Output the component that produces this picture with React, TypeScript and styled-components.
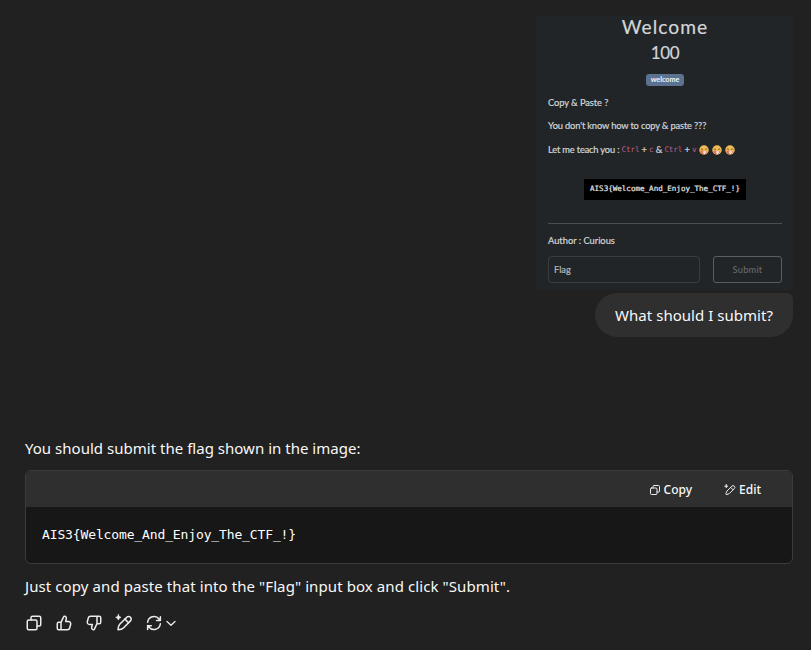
import React from "react";
import styled, { createGlobalStyle } from "styled-components";

const GlobalStyle = createGlobalStyle`
  * { box-sizing: border-box; }
  body { margin: 0; background: #212121; }
`;

const Page = styled.main`
  height: 650px;
  overflow: hidden;
  padding: 16px 18px 0 25px;
  background: #212121;
  color: #f8f8f8;
  font-family: "Noto Sans", "Open Sans", sans-serif;
  font-size: 15px;
  white-space: nowrap;
`;

const UserTurn = styled.section`
  display: flex;
  flex-direction: column;
  align-items: flex-end;
  gap: 3px;
`;

const Attachment = styled.article`
  width: 257px;
  height: 274px;
  padding: 0 11px 0 12px;
  border-radius: 3px;
  background: #212528;
  color: #d3d5d7;
  font-family: Lato, sans-serif;
  font-size: 9.3px;
`;

const Title = styled.h1`
  margin: 0;
  height: 23px;
  font-size: 19.2px;
  line-height: 22px;
  font-weight: 400;
  letter-spacing: 1.05px;
  text-align: center;
  -webkit-text-stroke: 0.2px #d3d5d7;
`;

const Points = styled.div`
  height: 27px;
  font-size: 17px;
  line-height: 27px;
  letter-spacing: -0.4px;
  text-align: center;
  -webkit-text-stroke: 0.2px #d3d5d7;
`;

const Tag = styled.div`
  width: 38px;
  height: 12px;
  margin: 8px auto 11px;
  border-radius: 3px;
  background: #5b7290;
  color: #f2f5f8;
  font-size: 7.2px;
  line-height: 12px;
  font-weight: 700;
  text-align: center;
`;

const Paragraph = styled.p<{ $spacing?: number }>`
  display: flex;
  align-items: center;
  height: 12px;
  margin: 0 0 11.4px;
  line-height: 12px;
  letter-spacing: ${(p) => p.$spacing ?? 0}px;
  white-space: pre;
  -webkit-text-stroke: 0.2px #d3d5d7;
`;

const Key = styled.code`
  color: #c0608a;
  font-family: "DejaVu Sans Mono", monospace;
  font-size: 7.7px;
  -webkit-text-stroke: 0;
`;

const Emojis = styled.span`
  display: flex;
  gap: 3px;
  margin-left: 3px;
`;

const FlagStrip = styled.div`
  width: 162px;
  height: 21px;
  margin: 23px auto;
  background: #000;
  color: #e6e6e6;
  font-family: "DejaVu Sans Mono", monospace;
  font-size: 7.55px;
  line-height: 20px;
  text-align: center;
  -webkit-text-stroke: 0.2px #e6e6e6;
`;

const Divider = styled.div`
  height: 1px;
  margin-bottom: 11px;
  background: #4a4e51;
`;

const Form = styled.div`
  display: grid;
  grid-template-columns: 152px 69px;
  justify-content: space-between;
  margin-top: -2px;
`;

const FlagField = styled.div`
  height: 27px;
  padding-left: 5px;
  border: 1px solid #393d41;
  border-radius: 4px;
  color: #b4b7ba;
  line-height: 26px;
  -webkit-text-stroke: 0.2px #b4b7ba;
`;

const SubmitButton = styled.div`
  height: 27px;
  border: 1px solid #5a5e62;
  border-radius: 3px;
  color: #6a6e71;
  line-height: 25px;
  letter-spacing: 0.2px;
  text-align: center;
`;

const Bubble = styled.div`
  width: 198px;
  height: 44px;
  border-radius: 22px 6px 22px 22px;
  background: #2f2f2f;
  line-height: 44px;
  text-align: center;
  letter-spacing: 0.03px;
`;

const Answer = styled.section`
  margin-top: 99px;
`;

const Message = styled.p<{ $spacing: number }>`
  margin: 0;
  height: 24px;
  line-height: 24px;
  letter-spacing: ${(p) => p.$spacing}px;
`;

const CodeBlock = styled.div`
  height: 94px;
  margin: 10px 0 10px;
  border: 1px solid #3b3b3b;
  border-radius: 6px;
  background: #171717;
  overflow: hidden;
`;

const Toolbar = styled.header`
  display: flex;
  justify-content: flex-end;
  gap: 32px;
  height: 36px;
  padding-right: 31px;
  background: #2f2f2f;
`;

const ToolButton = styled.div`
  display: flex;
  align-items: center;
  gap: 3px;
  height: 37px;
  font-size: 12px;
  font-weight: 500;
`;

const Code = styled.pre`
  margin: 0;
  padding: 18px 16px;
  color: #fff;
  font-family: "DejaVu Sans Mono", monospace;
  font-size: 13px;
  line-height: 20px;
  letter-spacing: -0.13px;
`;

const Actions = styled.footer`
  display: flex;
  align-items: center;
  gap: 12px;
  height: 20px;
  margin-top: 15px;
`;

const Regenerate = styled.div`
  display: flex;
  align-items: center;
  gap: 2px;
`;

const Icon = styled.svg.attrs({ viewBox: "0 0 24 24" })<{ $size: number }>`
  display: block;
  flex: none;
  width: ${(p) => p.$size}px;
  height: ${(p) => p.$size}px;
  fill: none;
  stroke: #ececec;
  stroke-width: 2;
  stroke-linecap: round;
  stroke-linejoin: round;
`;

const CopyIcon = ({ size = 18 }) => (
  <Icon $size={size}>
    <rect x="3" y="8" width="13" height="13" rx="2" />
    <path d="M8 8V5a2 2 0 0 1 2-2h9a2 2 0 0 1 2 2v9a2 2 0 0 1-2 2h-3" />
  </Icon>
);

const thumb =
  "M8 11.2 11.3 4.1c.3-.7.9-1.1 1.6-1 1.6.2 2.6 1.7 2.2 3.2L14.2 10H18c2 0 3.4 1.8 2.9 3.7l-1.3 5A3 3 0 0 1 16.700 21H5a2 2 0 0 1-2-2v-6a2 2 0 0 1 2-2h3v10";

const ThumbUpIcon = () => (
  <Icon $size={18}>
    <path d={thumb} />
  </Icon>
);

const ThumbDownIcon = () => (
  <Icon $size={18}>
    <path d={thumb} transform="rotate(180 12 12)" />
  </Icon>
);

const EditIcon = ({ size = 18 }) => (
  <Icon $size={size}>
    <path d="M6.300 13.700 15.700 4.300a3.400 3.400 0 0 1 4.900 4.900L11.200 18.600C9.600 20.200 7.200 20.800 4 21c.1-3.200.7-5.700 2.300-7.300Z" />
    <path d="m13.300 6.800 4.800 4.800" />
    <path
      d="M4.500 1c.6 2.200 1.300 2.900 3.500 3.500-2.200.6-2.900 1.300-3.500 3.500C3.900 5.800 3.200 5.100 1 4.500 3.200 3.900 3.900 3.200 4.500 1Z"
      fill="#ececec"
      strokeWidth="1.200"
    />
  </Icon>
);

const RefreshIcon = () => (
  <Icon $size={18}>
    <path d="M3.500 11a8.600 8.600 0 0 1 15.300-4.300L20.500 8.500M20.500 3.500v5h-5M20.500 13a8.600 8.600 0 0 1-15.300 4.300L3.500 15.500M3.500 20.500v-5h5" />
  </Icon>
);

const ChevronIcon = () => (
  <Icon $size={12}>
    <path d="m4 9 8 7.500 8-7.500" strokeWidth="2.600" />
  </Icon>
);

const Emoji = () => (
  <svg width="10" height="10" viewBox="0 0 20 20">
    <circle cx="10" cy="10" r="9.500" fill="#efbd55" />
    <path
      d="M3.500 9q2-2.500 4.500 0M12 9q2.500-2.500 4.500 0"
      stroke="#70472c"
      strokeWidth="1.700"
      fill="none"
    />
    <path d="M2 13q5-3 10-1l5 1q-2 5-7 6.500Q4 18 2 13" fill="#dc6f50" />
    <path d="M7 13.500q5-3 8 0-2 5-5 5Z" fill="#f6dbe0" />
  </svg>
);

export default function App() {
  return (
    <>
      <GlobalStyle />
      <Page>
        <UserTurn>
          <Attachment>
            <Title>Welcome</Title>
            <Points>100</Points>
            <Tag>welcome</Tag>
            <Paragraph $spacing={-0.07}>Copy &amp; Paste ?</Paragraph>
            <Paragraph $spacing={-0.15}>You don't know how to copy &amp; paste ???</Paragraph>
            <Paragraph $spacing={-0.17}>
              Let me teach you : <Key>Ctrl</Key> + <Key>c</Key> &amp; <Key>Ctrl</Key> + <Key>v</Key>
              <Emojis>
                <Emoji />
                <Emoji />
                <Emoji />
              </Emojis>
            </Paragraph>
            <FlagStrip>{"AIS3{Welcome_And_Enjoy_The_CTF_!}"}</FlagStrip>
            <Divider />
            <Paragraph>Author : Curious</Paragraph>
            <Form>
              <FlagField>Flag</FlagField>
              <SubmitButton>Submit</SubmitButton>
            </Form>
          </Attachment>
          <Bubble>What should I submit?</Bubble>
        </UserTurn>
        <Answer>
          <Message $spacing={0.02}>You should submit the flag shown in the image:</Message>
          <CodeBlock>
            <Toolbar>
              <ToolButton>
                <CopyIcon size={12} />
                Copy
              </ToolButton>
              <ToolButton>
                <EditIcon size={12} />
                Edit
              </ToolButton>
            </Toolbar>
            <Code>{"AIS3{Welcome_And_Enjoy_The_CTF_!}"}</Code>
          </CodeBlock>
          <Message $spacing={0.09}>
            Just copy and paste that into the "Flag" input box and click "Submit".
          </Message>
          <Actions>
            <CopyIcon />
            <ThumbUpIcon />
            <ThumbDownIcon />
            <EditIcon />
            <Regenerate>
              <RefreshIcon />
              <ChevronIcon />
            </Regenerate>
          </Actions>
        </Answer>
      </Page>
    </>
  );
}
